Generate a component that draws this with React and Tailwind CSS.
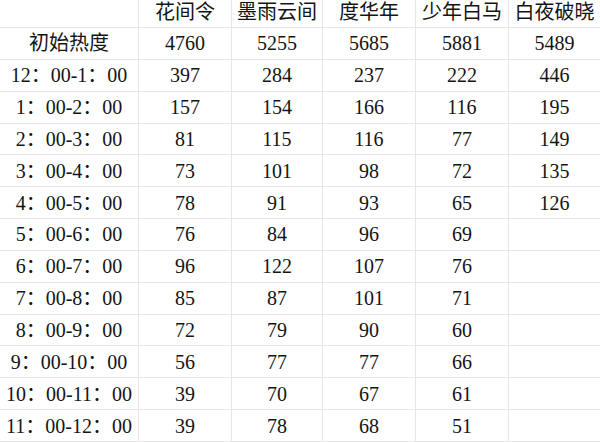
const headers = ['', '花间令', '墨雨云间', '度华年', '少年白马', '白夜破晓'];

const rows = [
  ['初始热度', '4760', '5255', '5685', '5881', '5489'],
  ['12：00-1：00', '397', '284', '237', '222', '446'],
  ['1：00-2：00', '157', '154', '166', '116', '195'],
  ['2：00-3：00', '81', '115', '116', '77', '149'],
  ['3：00-4：00', '73', '101', '98', '72', '135'],
  ['4：00-5：00', '78', '91', '93', '65', '126'],
  ['5：00-6：00', '76', '84', '96', '69', ''],
  ['6：00-7：00', '96', '122', '107', '76', ''],
  ['7：00-8：00', '85', '87', '101', '71', ''],
  ['8：00-9：00', '72', '79', '90', '60', ''],
  ['9：00-10：00', '56', '77', '77', '66', ''],
  ['10：00-11：00', '39', '70', '67', '61', ''],
  ['11：00-12：00', '39', '78', '68', '51', ''],
];

const font = { fontFamily: '"Liberation Serif", "Noto Sans CJK SC", serif' };

export default function App() {
  const all = [headers, ...rows];
  return (
    <div
      className="w-[600px] h-[442px] bg-white text-[#141414] text-[20px] leading-none overflow-hidden grid grid-cols-[139px_93px_91px_93px_93px_91px] grid-rows-[28px_repeat(13,1fr)]"
      style={font}
    >
      {all.map((row, r) =>
        row.map((cell, c) => (
          <div
            key={`${r}-${c}`}
            className={`flex items-center justify-center whitespace-nowrap border-b border-[#e6e6e6] ${
              c < 5 ? 'border-r' : ''
            } ${r === 0 ? 'pb-[4px]' : ''}`}
          >
            {cell}
          </div>
        ))
      )}
    </div>
  );
}
